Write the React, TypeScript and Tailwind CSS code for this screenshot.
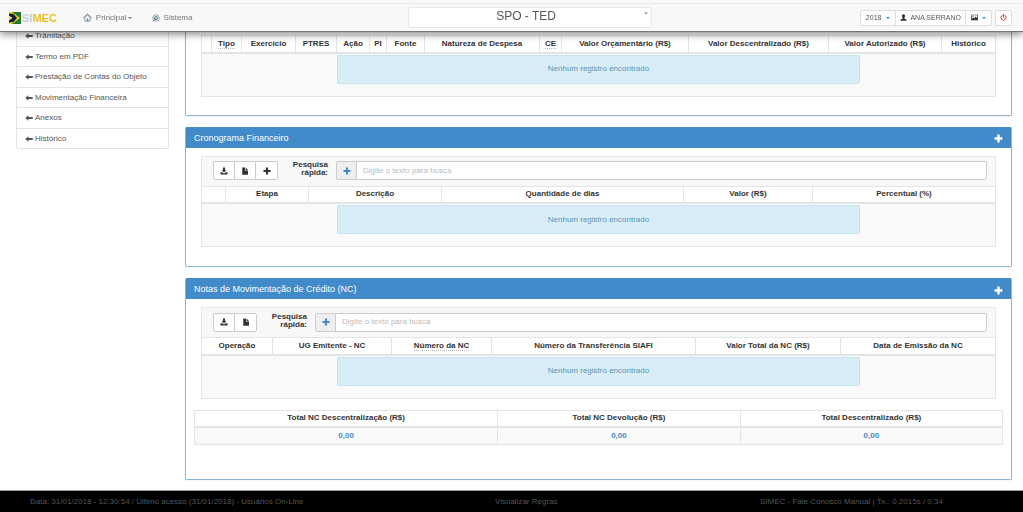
import React from 'react';

interface Column {
  label: string;
  width: number;
  hint?: string;
}

interface IconProps {
  className?: string;
}

const menuItems = [
  'Trâmitação',
  'Termo em PDF',
  'Prestação de Contas do Objeto',
  'Movimentação Financeira',
  'Anexos',
  'Histórico',
];

const creditColumns: Column[] = [
  { label: '', width: 10 },
  { label: 'Tipo', width: 30, hint: 'Tipo de crédito' },
  { label: 'Exercício', width: 54 },
  { label: 'PTRES', width: 41 },
  { label: 'Ação', width: 33 },
  { label: 'PI', width: 17 },
  { label: 'Fonte', width: 38 },
  { label: 'Natureza de Despesa', width: 115 },
  { label: 'CE', width: 22, hint: 'Categoria Econômica' },
  { label: 'Valor Orçamentário (R$)', width: 127 },
  { label: 'Valor Descentralizado (R$)', width: 140 },
  { label: 'Valor Autorizado (R$)', width: 113 },
  { label: 'Histórico', width: 54 },
];

const scheduleColumns: Column[] = [
  { label: '', width: 24 },
  { label: 'Etapa', width: 83 },
  { label: 'Descrição', width: 133 },
  { label: 'Quantidade de dias', width: 242 },
  { label: 'Valor (R$)', width: 129 },
  { label: 'Percentual (%)', width: 183 },
];

const noteColumns: Column[] = [
  { label: 'Operação', width: 71 },
  { label: 'UG Emitente - NC', width: 119 },
  { label: 'Número da NC', width: 100, hint: 'Nota de Crédito' },
  { label: 'Número da Transferência SIAFI', width: 204 },
  { label: 'Valor Total da NC (R$)', width: 145 },
  { label: 'Data de Emissão da NC', width: 155 },
];

const totals = [
  { label: 'Total NC Descentralização (R$)', width: 304, value: '0,00' },
  { label: 'Total NC Devolução (R$)', width: 243, value: '0,00' },
  { label: 'Total Descentralizado (R$)', width: 263, value: '0,00' },
];

const PlusIcon = ({ className }: IconProps) => (
  <svg viewBox="0 0 10 10" fill="currentColor" className={className} aria-hidden="true">
    <path d="M3.700 .6h2.600v3.100h3.100v2.600H6.300v3.100H3.700V6.300H.6V3.700h3.100z" />
  </svg>
);

const ArrowLeftIcon = ({ className }: IconProps) => (
  <svg viewBox="0 0 16 16" fill="currentColor" className={className} aria-hidden="true">
    <path d="M0.500 8 7 2.500v3.700h8.500v3.600H7v3.700z" />
  </svg>
);

const DownloadIcon = ({ className }: IconProps) => (
  <svg viewBox="0 0 16 16" fill="currentColor" className={className} aria-hidden="true">
    <path d="M6 1h4v5h2.800L8 11 3.200 6H6zM1 10.500h3.500L7 12.500h2l2.500-2H15V15H1z" />
  </svg>
);

const FileIcon = ({ className }: IconProps) => (
  <svg viewBox="0 0 16 16" fill="currentColor" className={className} aria-hidden="true">
    <path d="M2.500 1H8v6h6v8.500H2.500zM9.300 1 14 5.800H9.300z" />
  </svg>
);

const UserIcon = ({ className }: IconProps) => (
  <svg viewBox="0 0 16 16" fill="currentColor" className={className} aria-hidden="true">
    <path d="M8 .5c2.300 0 3.600 1.600 3.600 4 0 1.700-.7 3.300-1.700 4.200v1.600c1.800.9 5.100 1.700 5.100 3.700v1.500H1V14c0-2 3.300-2.800 5.100-3.700V8.700C5.100 7.800 4.400 6.200 4.400 4.500c0-2.400 1.300-4 3.600-4z" />
  </svg>
);

const PictureIcon = ({ className }: IconProps) => (
  <svg viewBox="0 0 16 16" fill="currentColor" className={className} aria-hidden="true">
    <path
      fillRule="evenodd"
      d="M0 1.500h16v13H0zM1.500 3v8.500l3.500-4 2.500 2.500 3-4.500 4 4V3z"
    />
    <circle cx="4.500" cy="5.200" r="1.300" />
  </svg>
);

const PowerIcon = ({ className }: IconProps) => (
  <svg
    viewBox="0 0 16 16"
    fill="none"
    stroke="currentColor"
    strokeWidth="2.200"
    strokeLinecap="round"
    className={className}
    aria-hidden="true"
  >
    <path d="M8 1.200v6.500M4.300 3.300a6 6 0 1 0 7.400 0" />
  </svg>
);

const HomeIcon = ({ className }: IconProps) => (
  <svg viewBox="0 0 16 16" fill="none" className={className} aria-hidden="true">
    <path d="M3.200 8v6.500h9.600V8L8 3.500z" fill="#fff" stroke="#6b7f8d" strokeWidth="1.300" />
    <path d="M.8 8.800 8 2l7.200 6.800" stroke="#56707f" strokeWidth="1.700" />
    <path d="M6.500 9.500h3v5h-3z" fill="#3f9bc4" />
  </svg>
);

const SystemIcon = ({ className }: IconProps) => (
  <svg viewBox="0 0 16 16" fill="none" className={className} aria-hidden="true">
    <circle cx="8" cy="8" r="6.500" stroke="#7f8f9a" strokeWidth="1.500" />
    <circle cx="8" cy="8" r="3" stroke="#4a6472" strokeWidth="1.800" />
    <path d="M1.500 14.500l4-4" stroke="#4a6472" strokeWidth="1.800" />
    <circle cx="8" cy="8" r="1.200" fill="#3f9bc4" />
  </svg>
);

const CaretIcon = ({ className }: IconProps) => (
  <svg viewBox="0 0 8 4" fill="currentColor" className={className} aria-hidden="true">
    <path d="M0 0h8L4 4z" />
  </svg>
);

const Logo = () => (
  <a href="#" className="flex items-center" aria-label="SIMEC">
    <svg viewBox="0 0 24 24" className="size-3" aria-hidden="true">
      <path d="M0 0h24v24H0z" fill="#1d7a35" />
      <path d="M0 0h6l16 12L6 24H0z" fill="#f1d51c" />
      <path d="M0 3 9 4l7 8-7 8-9 1z" fill="#171c33" />
      <path d="M0 7l7 5-7 5z" fill="#e9e27a" />
    </svg>
    <span className="pl-px text-[11px] leading-3 font-bold text-[#c9cdd0]">
      SI<span className="text-[#e8bd2c]">MEC</span>
    </span>
  </a>
);

const TopBar = () => (
  <header className="fixed inset-x-0 top-0 z-10 flex h-8 items-center border-b border-[#777] bg-[#f8f8f8] pt-1 pr-[11px] pl-[9px] shadow-[0_2px_8px_rgba(0,0,0,0.5)]">
    <div className="absolute inset-x-0 top-[3px] border-t border-[#ececec]" />
    <div className="flex w-[39.8%] items-center">
      <Logo />
      <nav className="flex items-center gap-5 pl-[26px] text-[#777]">
        <a href="#" className="flex items-center">
          <HomeIcon className="mr-1 size-[9px]" />
          Principal
          <CaretIcon className="ml-px h-[2px] w-1" />
        </a>
        <a href="#" className="flex items-center">
          <SystemIcon className="mr-1 size-2" />
          Sistema
        </a>
      </nav>
    </div>
    <div className="relative w-[24.3%]">
      <select
        aria-label="Módulo"
        className="block h-[21px] w-full appearance-none rounded-xs border border-[#e7e7e7] bg-white pr-2 pb-1 text-center text-xs leading-4 text-[#555]"
      >
        <option>SPO - TED</option>
      </select>
      <CaretIcon className="pointer-events-none absolute top-[5px] right-1 h-[3px] w-1 text-[#888]" />
    </div>
    <div className="flex flex-1 items-center justify-end gap-[3px] text-[7px] text-[#555]">
      <div className="flex h-4 divide-x divide-[#ddd] rounded-xs border border-[#ddd] bg-white">
        <button type="button" className="flex items-center gap-[5px] px-[5px]">
          2018
          <CaretIcon className="h-[2px] w-1 text-[#428bca]" />
        </button>
        <button type="button" className="flex items-center gap-[3px] px-1">
          <UserIcon className="size-[7px] text-[#333]" />
          ANA SERRANO
        </button>
        <button type="button" aria-label="Tema" className="flex items-center gap-1 px-[5px]">
          <PictureIcon className="size-[7px] text-[#333]" />
          <CaretIcon className="h-[2px] w-1 text-[#428bca]" />
        </button>
      </div>
      <button
        type="button"
        aria-label="Sair"
        className="flex h-4 w-[17px] items-center justify-center rounded-xs border border-[#ddd] bg-white"
      >
        <PowerIcon className="size-[7px] text-[#e8232a]" />
      </button>
    </div>
  </header>
);

const SideMenu = () => (
  <aside className="w-[153px] shrink-0">
    <ul className="flex h-[124px] flex-col divide-y divide-[#e4e4e4] rounded-b-xs border border-[#e4e4e4] text-[#555]">
      {menuItems.map((item) => (
        <li key={item} className="flex flex-1">
          <a href="#" className="flex flex-1 items-center gap-[2px] pt-px pl-2">
            <ArrowLeftIcon className="size-2" />
            {item}
          </a>
        </li>
      ))}
    </ul>
  </aside>
);

const ColumnWidths = ({ columns }: { columns: { width: number }[] }) => {
  const total = columns.reduce((sum, column) => sum + column.width, 0);
  return (
    <colgroup>
      {columns.map((column, index) => (
        <col key={index} style={{ width: `${(column.width / total) * 100}%` }} />
      ))}
    </colgroup>
  );
};

const EmptyTable = ({ columns }: { columns: Column[] }) => (
  <table className="w-full table-fixed border-collapse border border-[#e4e4e4] bg-[#f9f9f9]">
    <ColumnWidths columns={columns} />
    <thead>
      <tr>
        {columns.map((column, index) => (
          <th
            key={index}
            className="h-[17px] border border-b-2 border-[#e4e4e4] bg-white whitespace-nowrap text-[#333]"
          >
            {column.hint ? (
              <abbr
                title={column.hint}
                className="border-b border-dotted border-[#bbb] no-underline"
              >
                {column.label}
              </abbr>
            ) : (
              column.label
            )}
          </th>
        ))}
      </tr>
    </thead>
    <tbody>
      <tr>
        <td colSpan={columns.length} className="pt-px pb-3">
          <div className="mx-auto flex h-[29px] w-[66%] items-center justify-center rounded-xs border border-[#c3e4ec] bg-[#d9edf7] text-[#5795b4]">
            Nenhum registro encontrado
          </div>
        </td>
      </tr>
    </tbody>
  </table>
);

const Toolbar = ({ id, canAdd = false }: { id: string; canAdd?: boolean }) => (
  <div className="flex h-[30px] items-center border border-b-0 border-[#e7e7e7] bg-[#f8f8f8] pr-2 pb-px pl-[11px]">
    <div className="flex h-[19px] divide-x divide-[#ccc] rounded-xs border border-[#ccc] bg-white text-[#333]">
      <button type="button" aria-label="Exportar" className="flex w-[21px] items-center justify-center">
        <DownloadIcon className="size-2" />
      </button>
      <button type="button" aria-label="Arquivo" className="flex w-[21px] items-center justify-center">
        <FileIcon className="size-2" />
      </button>
      {canAdd && (
        <button type="button" aria-label="Adicionar" className="flex w-[21px] items-center justify-center">
          <PlusIcon className="size-2" />
        </button>
      )}
    </div>
    <label htmlFor={id} className="ml-[14px] w-9 pb-[3px] text-right leading-2 font-bold text-[#333]">
      Pesquisa rápida:
    </label>
    <div className="ml-2 flex h-[19px] flex-1 rounded-xs border border-[#ccc] bg-white">
      <button
        type="button"
        aria-label="Mais filtros"
        className="flex w-5 items-center justify-center border-r border-[#ccc] bg-[#eee] text-[#428bca]"
      >
        <PlusIcon className="size-2" />
      </button>
      <input
        id={id}
        type="text"
        placeholder="Digite o texto para busca"
        className="min-w-0 flex-1 px-[6px] text-[#555] outline-none placeholder:text-[#bbb]"
      />
    </div>
  </div>
);

interface PanelProps {
  title: string;
  className?: string;
  children: React.ReactNode;
}

const Panel = ({ title, className, children }: PanelProps) => (
  <section
    className={`rounded-xs border border-[#8ab6dd] border-t-[#428bca] bg-white shadow-xs ${className ?? ''}`}
  >
    <div className="flex h-5 items-center justify-between bg-[#428bca] px-2 text-white">
      <h2 className="text-[9px]">{title}</h2>
      <button type="button" aria-label={`Expandir ${title}`} className="pt-[2px]">
        <PlusIcon className="size-[9px]" />
      </button>
    </div>
    <div className="px-2 pt-2">{children}</div>
  </section>
);

const TotalsTable = () => (
  <table className="w-full table-fixed border-collapse">
    <ColumnWidths columns={totals} />
    <thead>
      <tr>
        {totals.map((total) => (
          <th key={total.label} className="h-[17px] border border-b-2 border-[#e4e4e4] text-[#333]">
            {total.label}
          </th>
        ))}
      </tr>
    </thead>
    <tbody>
      <tr>
        {totals.map((total) => (
          <td
            key={total.label}
            className="h-[17px] border border-[#e4e4e4] bg-[#f9f9f9] text-center font-bold text-[#428bca]"
          >
            {total.value}
          </td>
        ))}
      </tr>
    </tbody>
  </table>
);

export default function App() {
  return (
    <div className="bg-white font-['Liberation_Sans',Arial,sans-serif] text-[8px] leading-[10px]">
      <TopBar />
      <div className="flex items-start gap-4 pt-[25px] pr-[11px] pb-[10px] pl-4">
        <SideMenu />
        <main className="flex min-w-0 flex-1 flex-col gap-[11px]">
          <section className="rounded-b-xs border border-t-0 border-[#8ab6dd] px-[15px] pt-[10px] pb-[18px] shadow-xs">
            <EmptyTable columns={creditColumns} />
          </section>
          <Panel title="Cronograma Financeiro" className="pb-[19px]">
            <div className="px-[7px]">
              <Toolbar id="busca-cronograma" canAdd />
              <EmptyTable columns={scheduleColumns} />
            </div>
          </Panel>
          <Panel title="Notas de Movimentação de Crédito (NC)" className="pb-[34px]">
            <div className="px-[7px] pb-[11px]">
              <Toolbar id="busca-notas" />
              <EmptyTable columns={noteColumns} />
            </div>
            <TotalsTable />
          </Panel>
        </main>
      </div>
      <footer className="grid grid-cols-[465fr_265fr_263fr] items-center border-t border-[#999] bg-black pt-[6px] pb-[5px] pl-[30px] text-[#555]">
        <p>
          Data: 31/01/2018 - 12:30:54 / Último acesso (31/01/2018) - <a href="#">Usuários On-Line</a>
        </p>
        <a href="#">Visualizar Regras</a>
        <p>
          SIMEC - <a href="#">Fale Conosco</a> <a href="#">Manual</a> | Tx.: 0,2015s / 0,34
        </p>
      </footer>
    </div>
  );
}
